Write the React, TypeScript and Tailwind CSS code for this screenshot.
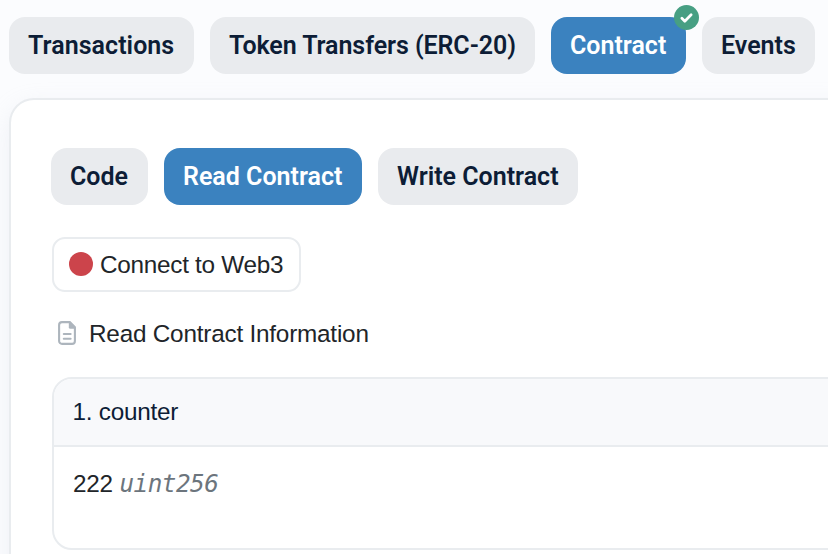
import React from "react";

type TabProps = {
  label: string;
  width: string;
  active?: boolean;
  verified?: boolean;
};

function VerifiedBadge() {
  return (
    <span className="absolute -right-[13px] -top-[12px] flex size-[25px] items-center justify-center rounded-full bg-[#479f83]">
      <svg width="13" height="10" viewBox="0 0 13 10" fill="none" stroke="white" strokeWidth="2.7" strokeLinecap="round" strokeLinejoin="round">
        <path d="M1.9 5.3 4.8 8.2 11.1 1.8" />
      </svg>
    </span>
  );
}

function Tab({ label, width, active, verified }: TabProps) {
  return (
    <button
      className={`relative h-[57px] shrink-0 whitespace-nowrap rounded-[16px] pl-[19px] text-left font-['Roboto',sans-serif] text-[25px] font-semibold leading-[57px] ${width} ${
        active ? "bg-[#3b82bf] text-white" : "bg-[#e9ebee] text-[#0d1d36]"
      }`}
    >
      {label}
      {verified && <VerifiedBadge />}
    </button>
  );
}

function FileIcon() {
  return (
    <svg className="relative -top-px" width="18" height="24" viewBox="0 0 18 24" fill="none" stroke="#adb5bd" strokeWidth="2.1" strokeLinecap="round">
      <path d="M4 1.1h7.8L16.9 6.2V20a2.9 2.9 0 0 1-2.9 2.9H4A2.9 2.9 0 0 1 1.1 20V4A2.9 2.9 0 0 1 4 1.1Z" strokeLinejoin="round" />
      <path d="M10.8 1v5.2A1.6 1.6 0 0 0 12.4 7.8H17.5V6L12 .5Z" fill="#adb5bd" stroke="none" />
      <path d="M5.8 13h6.8M5.8 17.8h6.8" />
    </svg>
  );
}

export default function App() {
  return (
    <div className="h-[554px] w-[828px] overflow-hidden bg-[#fbfcfe] pl-[9px] pt-[17px] font-['Liberation_Sans',Arial,sans-serif] text-[24.3px] tracking-[-0.21px] text-[#212529]">
      <nav className="flex gap-4 tracking-normal">
        <Tab label="Transactions" width="w-[185px] tracking-[0.05px]" />
        <Tab label="Token Transfers (ERC-20)" width="w-[325px] tracking-[-0.07px]" />
        <Tab label="Contract" width="w-[135px]" active verified />
        <Tab label="Events" width="w-[113px]" />
      </nav>
      <main className="mt-6 h-[500px] w-[860px] rounded-[25px] border-2 border-[#e9ecef] bg-white pl-[40px] pt-[48px] shadow-[0_8px_24px_rgba(189,197,209,0.2)]">
        <div className="flex gap-4 tracking-normal">
          <Tab label="Code" width="w-[97px]" />
          <Tab label="Read Contract" width="w-[198px]" active />
          <Tab label="Write Contract" width="w-[200px]" />
        </div>
        <button className="ml-px mt-8 flex h-[55px] w-[249px] items-center whitespace-nowrap rounded-[13px] border-2 border-[#e9ecef] bg-white pl-[15px]">
          <span className="mb-px mr-[7px] size-6 shrink-0 rounded-full bg-[#cc444b]" />
          <span className="pt-0.5 tracking-[-0.27px]">Connect to Web3</span>
        </button>
        <div className="ml-[7px] mt-[24px] flex h-9 items-center gap-[13px]">
          <FileIcon />
          <span>Read Contract Information</span>
        </div>
        <section className="ml-px mt-[25px] h-[173px] overflow-hidden rounded-[20px] border-2 border-[#e9ecef] bg-white">
          <h2 className="h-[68px] border-b-2 border-[#e9ecef] bg-[#f8f9fb] pl-[18.5px] leading-[66px] tracking-[-0.25px] text-[#0d1d36]">
            1. counter
          </h2>
          <div className="flex items-baseline pl-[19px] pt-[19px] leading-9">
            <span>222</span>
            <i className="ml-[6.5px] font-['DejaVu_Sans_Mono',monospace] text-[24.3px] tracking-[-0.5px] text-[#6c757d]">uint256</i>
          </div>
        </section>
      </main>
    </div>
  );
}
